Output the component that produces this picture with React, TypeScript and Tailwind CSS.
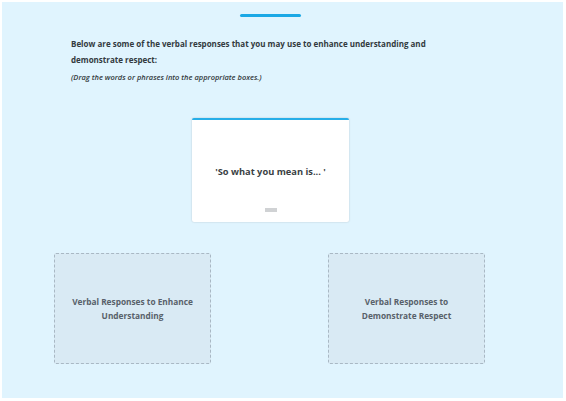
export default function App() {
  return (
    <div className="w-[566px] h-[401px] bg-white pl-[2px] pt-[2px] pr-[3px] pb-[3px]" style={{ fontFamily: '"Open Sans", sans-serif' }}>
      <div className="h-full bg-[#e0f4fe] flex flex-col">
        {/* Progress bar */}
        <div className="mx-auto mt-[12px] w-[61px] h-[3px] bg-[#1ba8e5] rounded-sm translate-x-[-12px]" />

        {/* Instructions */}
        <div className="pl-[69px] pt-[19px] text-[#333a40]">
          <p className="text-[8px] font-bold leading-[16px]">
            Below are some of the verbal responses that you may use to enhance understanding and
            <br />
            demonstrate respect:
          </p>
          <p className="text-[7.5px] font-semibold italic leading-[16px] mt-[1px]">
            (Drag the words or phrases into the appropriate boxes.)
          </p>
        </div>

        {/* Draggable card */}
        <div className="mx-auto mt-[33px] w-[157px] h-[104px] bg-white border-t-2 border-[#27aee8] rounded-[2px] shadow-[0_0_2px_rgba(0,0,0,0.2)] flex flex-col items-center translate-x-[-12px]">
          <div className="flex-1 flex items-center pt-[16px]">
            <span className="text-[9.3px] font-bold text-[#3a3f44]">'So what you mean is... '</span>
          </div>
          <div className="w-[12px] h-[4px] bg-[#d0d2d4] mb-[10px]" />
        </div>

        {/* Drop targets */}
        <div className="flex mt-[31px] pl-[52px] gap-[117px]">
          <div className="w-[157px] h-[111px] bg-[#d9eaf4] border border-dashed border-[#a9b8c4] rounded-[2px] flex items-center justify-center text-center">
            <span className="text-[8.3px] font-bold text-[#58616a] leading-[14px]">
              Verbal Responses to Enhance
              <br />
              Understanding
            </span>
          </div>
          <div className="w-[157px] h-[111px] bg-[#d9eaf4] border border-dashed border-[#a9b8c4] rounded-[2px] flex items-center justify-center text-center">
            <span className="text-[8.3px] font-bold text-[#58616a] leading-[14px]">
              Verbal Responses to
              <br />
              Demonstrate Respect
            </span>
          </div>
        </div>
      </div>
    </div>
  );
}
